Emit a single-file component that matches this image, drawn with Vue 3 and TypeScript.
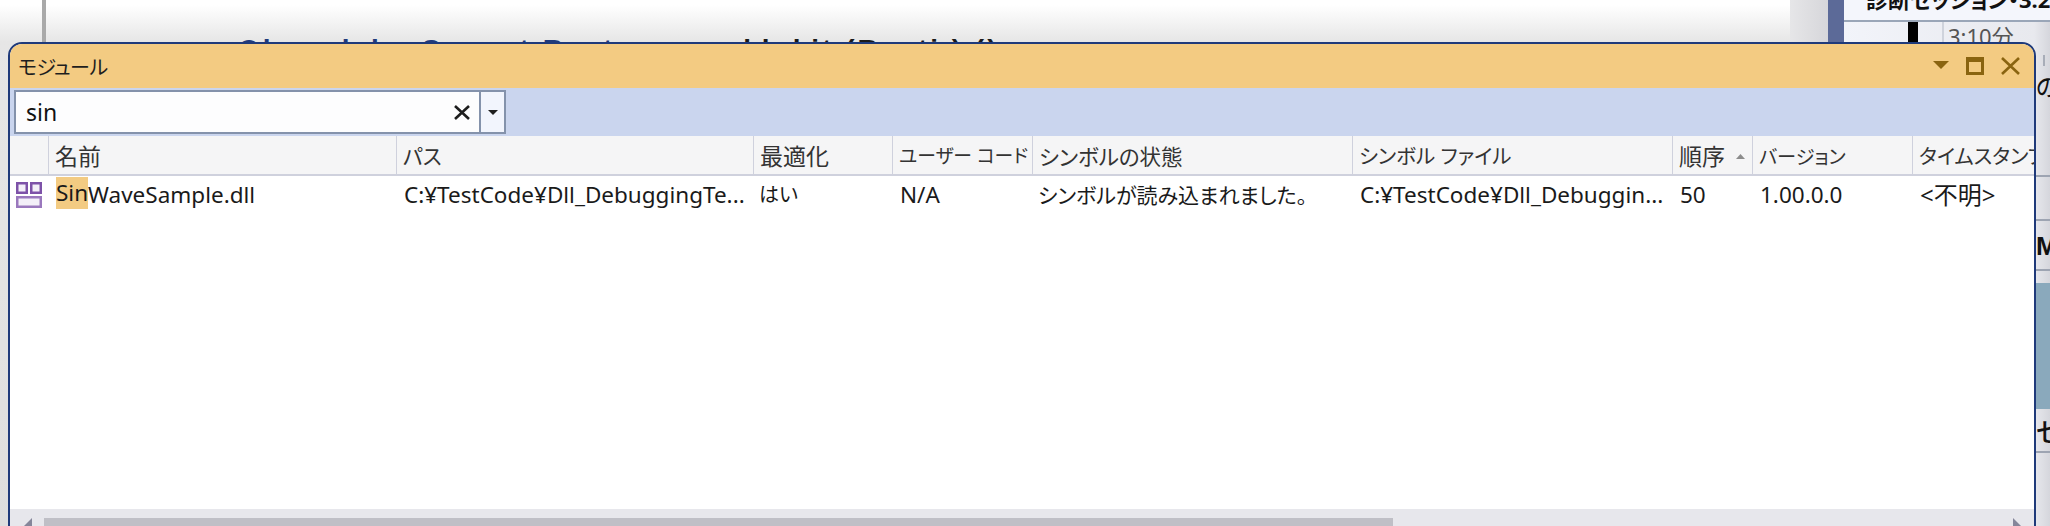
<script setup lang="ts">
interface Col {
  title: string
  cell: string
  width: number
  headSize: number
  bodySize: number
  sorted?: boolean
  jp?: boolean
}
const cols: Col[] = [
  { title: '名前', cell: '', width: 348, headSize: 23, bodySize: 22.5 },
  { title: 'パス', cell: 'C:¥TestCode¥Dll_DebuggingTe...', width: 357, headSize: 21, bodySize: 22.5 },
  { title: '最適化', cell: 'はい', width: 139, headSize: 23, bodySize: 20, jp: true },
  { title: 'ユーザー コード', cell: 'N/A', width: 140, headSize: 18.8, bodySize: 22.5 },
  { title: 'シンボルの状態', cell: 'シンボルが読み込まれました。', width: 320, headSize: 21.5, bodySize: 21, jp: true },
  { title: 'シンボル ファイル', cell: 'C:¥TestCode¥Dll_Debuggin...', width: 320, headSize: 20.5, bodySize: 22.5 },
  { title: '順序', cell: '50', width: 80, sorted: true, headSize: 23, bodySize: 22.5 },
  { title: 'バージョン', cell: '1.00.0.0', width: 160, headSize: 19.2, bodySize: 22.5 },
  { title: 'タイムスタンプ', cell: '<不明>', width: 200, headSize: 20.5, bodySize: 24 },
]
</script>

<template>
  <div class="page">
    <div class="backdrop">
      <div class="editor">
        <div class="gutter-line"></div>
        <div class="code">
          <span class="code-blue">Qlpmnk.ko Cmmnt Rcxtm</span>
          <span class="code-black">klokit (Rcxti.) ()</span>
        </div>
      </div>
      <div class="scroll-side"></div>
      <div class="blue-side"></div>
      <div class="panel">
        <div class="panel-head">診断セッション・3.2</div>
        <div class="timeline">
          <div class="black-bar"></div>
          <div class="time">3:10分</div>
        </div>
        <div class="tick"></div>
        <div class="strip-text no">の</div>
        <div class="rule r1"></div>
        <div class="rule r2"></div>
        <div class="strip-text em">M</div>
        <div class="rule r3"></div>
        <div class="picture"></div>
        <div class="strip-text se">セ</div>
        <div class="rule r4"></div>
      </div>
    </div>

    <section class="window">
      <header class="titlebar">
        <span class="title">モジュール</span>
        <div class="title-icons">
          <svg width="16" height="8" viewBox="0 0 16 8"><path d="M0 0h16l-8 8z" fill="#8a6410" /></svg>
          <svg width="18" height="18" viewBox="0 0 18 18"><path d="M1.5 5v11.5h15V5" fill="none" stroke="#8a6410" stroke-width="3" /><rect width="18" height="5" fill="#8a6410" /></svg>
          <svg width="19" height="18" viewBox="0 0 19 18"><path d="M1 1l17 16M18 1L1 17" fill="none" stroke="#8a6410" stroke-width="2.6" /></svg>
        </div>
      </header>

      <div class="toolbar">
        <div class="search">
          <span class="search-text">sin</span>
          <svg class="clear" width="16" height="15" viewBox="0 0 16 15"><path d="M1 1l14 13M15 1L1 14" fill="none" stroke="#1e1e1e" stroke-width="2.6" /></svg>
          <div class="search-drop">
            <svg width="10" height="5" viewBox="0 0 10 5"><path d="M0 0h10L5 5z" fill="#1e1e1e" /></svg>
          </div>
        </div>
      </div>

      <div class="table">
        <div class="head-row">
          <div class="icon-col head-cell"></div>
          <div
            v-for="c in cols"
            :key="c.title"
            class="head-cell"
            :style="{ width: c.width + 'px', fontSize: c.headSize + 'px' }"
          >
            <span>{{ c.title }}</span>
            <svg v-if="c.sorted" class="sort" width="9" height="5" viewBox="0 0 9 5"><path d="M0 5L4.5 0 9 5z" fill="#8c8c8c" /></svg>
          </div>
        </div>
        <div class="body-row">
          <div class="icon-col row-icon">
            <svg width="26" height="26" viewBox="0 0 26 26">
              <rect x="1.25" y="1.25" width="9.5" height="9.5" fill="#f3eff8" stroke="#7d52a8" stroke-width="2.5" />
              <rect x="15.25" y="1.25" width="9.5" height="9.5" fill="#f3eff8" stroke="#7d52a8" stroke-width="2.5" />
              <rect x="1.25" y="15.25" width="23.5" height="9.5" fill="#f3eff8" stroke="#9a78bd" stroke-width="2.5" />
            </svg>
          </div>
          <div
            v-for="(c, i) in cols"
            :key="c.title"
            class="body-cell"
            :class="{ jp: c.jp }"
            :style="{ width: c.width + 'px', fontSize: c.bodySize + 'px' }"
          >
            <template v-if="i === 0"><mark class="hit">Sin</mark>WaveSample.dll</template>
            <template v-else>{{ c.cell }}</template>
          </div>
        </div>
      </div>

      <div class="hscroll">
        <div class="hscroll-track">
          <div class="arrow left"></div>
          <div class="thumb"></div>
          <div class="arrow right"></div>
        </div>
      </div>
    </section>
  </div>
</template>

<style>
html, body { margin: 0; padding: 0; background: #fff; overflow: hidden; }
</style>

<style scoped>
.page {
  position: relative;
  width: 2050px;
  height: 526px;
  overflow: hidden;
  font-family: "Noto Sans", "Noto Sans CJK JP", sans-serif;
  font-feature-settings: "palt";
  color: #1e1e1e;
}
.backdrop { display: flex; height: 526px; }
.editor {
  position: relative;
  width: 1790px;
  background: linear-gradient(to bottom, #fff 5px, #e6e6e6 42px, #dedede 526px);
  overflow: hidden;
}
.gutter-line { position: absolute; left: 42px; top: 0; width: 4px; height: 42px; background: #a9a9a9; }
.code {
  position: absolute;
  left: 238px;
  top: 33px;
  white-space: nowrap;
  font-family: "Liberation Sans", sans-serif;
  font-size: 28px;
  font-weight: bold;
  line-height: 34px;
}
.code-blue { color: #1f3a7a; letter-spacing: 3px; }
.code-black { color: #1a1a1a; margin-left: 100px; letter-spacing: 3px; }
.scroll-side { width: 38px; background: linear-gradient(to right, #e6e6e8, #d6d6da); }
.blue-side { width: 16px; background: #5c6a98; }
.panel {
  width: 206px;
  background: linear-gradient(to right, #f2f4fa 0, #e8e9ee 190px, #d5d6dc 206px);
  display: flex;
  flex-direction: column;
}
.panel-head {
  flex: none;
  height: 32px;
  margin-top: -12px;
  padding-left: 22px;
  border-bottom: 2px solid #9aa6b8;
  background: #f4f6fc;
  font-size: 22px;
  line-height: 22px;
  font-weight: 700;
  color: #111;
  white-space: nowrap;
  overflow: hidden;
}
.timeline { display: flex; height: 20px; flex: none; }
.black-bar { width: 10px; margin-left: 64px; background: #000; }
.time {
  margin-left: 24px;
  padding-left: 4px;
  border-left: 2px solid #cfd3dc;
  color: #555;
  font-size: 22px;
  line-height: 28px;
  overflow: hidden;
}
.tick { flex: none; width: 2px; height: 11px; margin: 13px 0 0 199px; background: #a8adb8; }
.strip-text { flex: none; padding-left: 192px; font-size: 24px; line-height: 30px; color: #111; white-space: nowrap; }
.no { margin-top: 6px; }
.rule { height: 2px; background: #9da4b2; flex: none; }
.r1 { margin-top: 73px; }
.r2 { margin-top: 42px; }
.em { margin-top: 8px; font-family: "Liberation Sans", sans-serif; font-weight: bold; font-size: 26px; line-height: 34px; }
.r3 { margin-top: 6px; }
.picture { flex: none; height: 126px; margin-top: 12px; background: #8aa9bc; }
.se { margin-top: 5px; font-size: 26px; line-height: 36px; font-weight: 500; }
.r4 { margin-top: 1px; }

.window {
  position: absolute;
  left: 8px;
  top: 42px;
  width: 2028px;
  height: 500px;
  box-sizing: border-box;
  border: 2px solid #1f3a7a;
  border-radius: 14px 14px 0 0;
  background: #fff;
  overflow: hidden;
  display: flex;
  flex-direction: column;
}
.titlebar {
  flex: none;
  height: 44px;
  box-sizing: border-box;
  background: #f3cb82;
  display: flex;
  align-items: center;
  justify-content: space-between;
  padding: 0 14px 0 8px;
}
.title { font-size: 20px; line-height: 30px; padding-top: 4px; letter-spacing: -0.6px; }
.title-icons { display: flex; align-items: center; gap: 17px; }
.title-icons svg:first-child { margin-bottom: 2px; }
.toolbar {
  flex: none;
  height: 48px;
  box-sizing: border-box;
  background: #cad5ee;
  padding: 2px 0 2px 4px;
}
.search {
  width: 492px;
  height: 44px;
  box-sizing: border-box;
  border: 2px solid #8492ab;
  background: #fdfdfe;
  display: flex;
  align-items: center;
  padding-left: 10px;
}
.search-text { flex: 1; font-size: 23px; line-height: 30px; color: #111; }
.clear { margin-right: 9px; }
.search-drop {
  width: 23px;
  height: 100%;
  border-left: 2px solid #8492ab;
  background: #f2f5fd;
  display: flex;
  align-items: center;
  justify-content: center;
}
.table { flex: 1; min-height: 0; }
.head-row {
  display: flex;
  height: 40px;
  box-sizing: border-box;
  background: #f5f5f6;
  border-bottom: 2px solid #cfd1dd;
}
.head-cell {
  position: relative;
  flex: none;
  box-sizing: border-box;
  padding-left: 6px;
  border-right: 1px solid #cfd1dd;
  line-height: 41px;
  white-space: nowrap;
  overflow: hidden;
  color: #333;
}
.icon-col { width: 39px; flex: none; }
.sort { position: absolute; right: 7px; top: 18px; }
.body-row { display: flex; height: 38px; }
.row-icon { padding: 6px 0 0 6px; box-sizing: border-box; }
.body-cell {
  flex: none;
  box-sizing: border-box;
  padding-left: 7px;
  line-height: 38px;
  white-space: nowrap;
  overflow: hidden;
  color: #1a1a1a;
}
.body-cell.jp { padding-left: 5px; letter-spacing: 0; }
.hit { background: #f3cb82; color: inherit; display: inline-block; height: 32px; line-height: 32px; vertical-align: top; margin-top: 1px; }
.hscroll {
  flex: none;
  height: 30px;
  margin-bottom: 1px;
  background: #e7e7ec;
  box-sizing: border-box;
  padding-top: 9px;
}
.hscroll-track { display: flex; height: 21px; padding-left: 14px; position: relative; }
.thumb { width: 1349px; margin-left: 20px; background: #bfbfc6; height: 21px; }
.arrow { position: absolute; top: 0; width: 8px; height: 21px; background: #85869a; }
.arrow.left { left: 14px; clip-path: polygon(100% 0, 0 8px, 100% 16px); }
.arrow.right { left: 2003px; clip-path: polygon(0 0, 100% 8px, 0 16px); }
</style>
